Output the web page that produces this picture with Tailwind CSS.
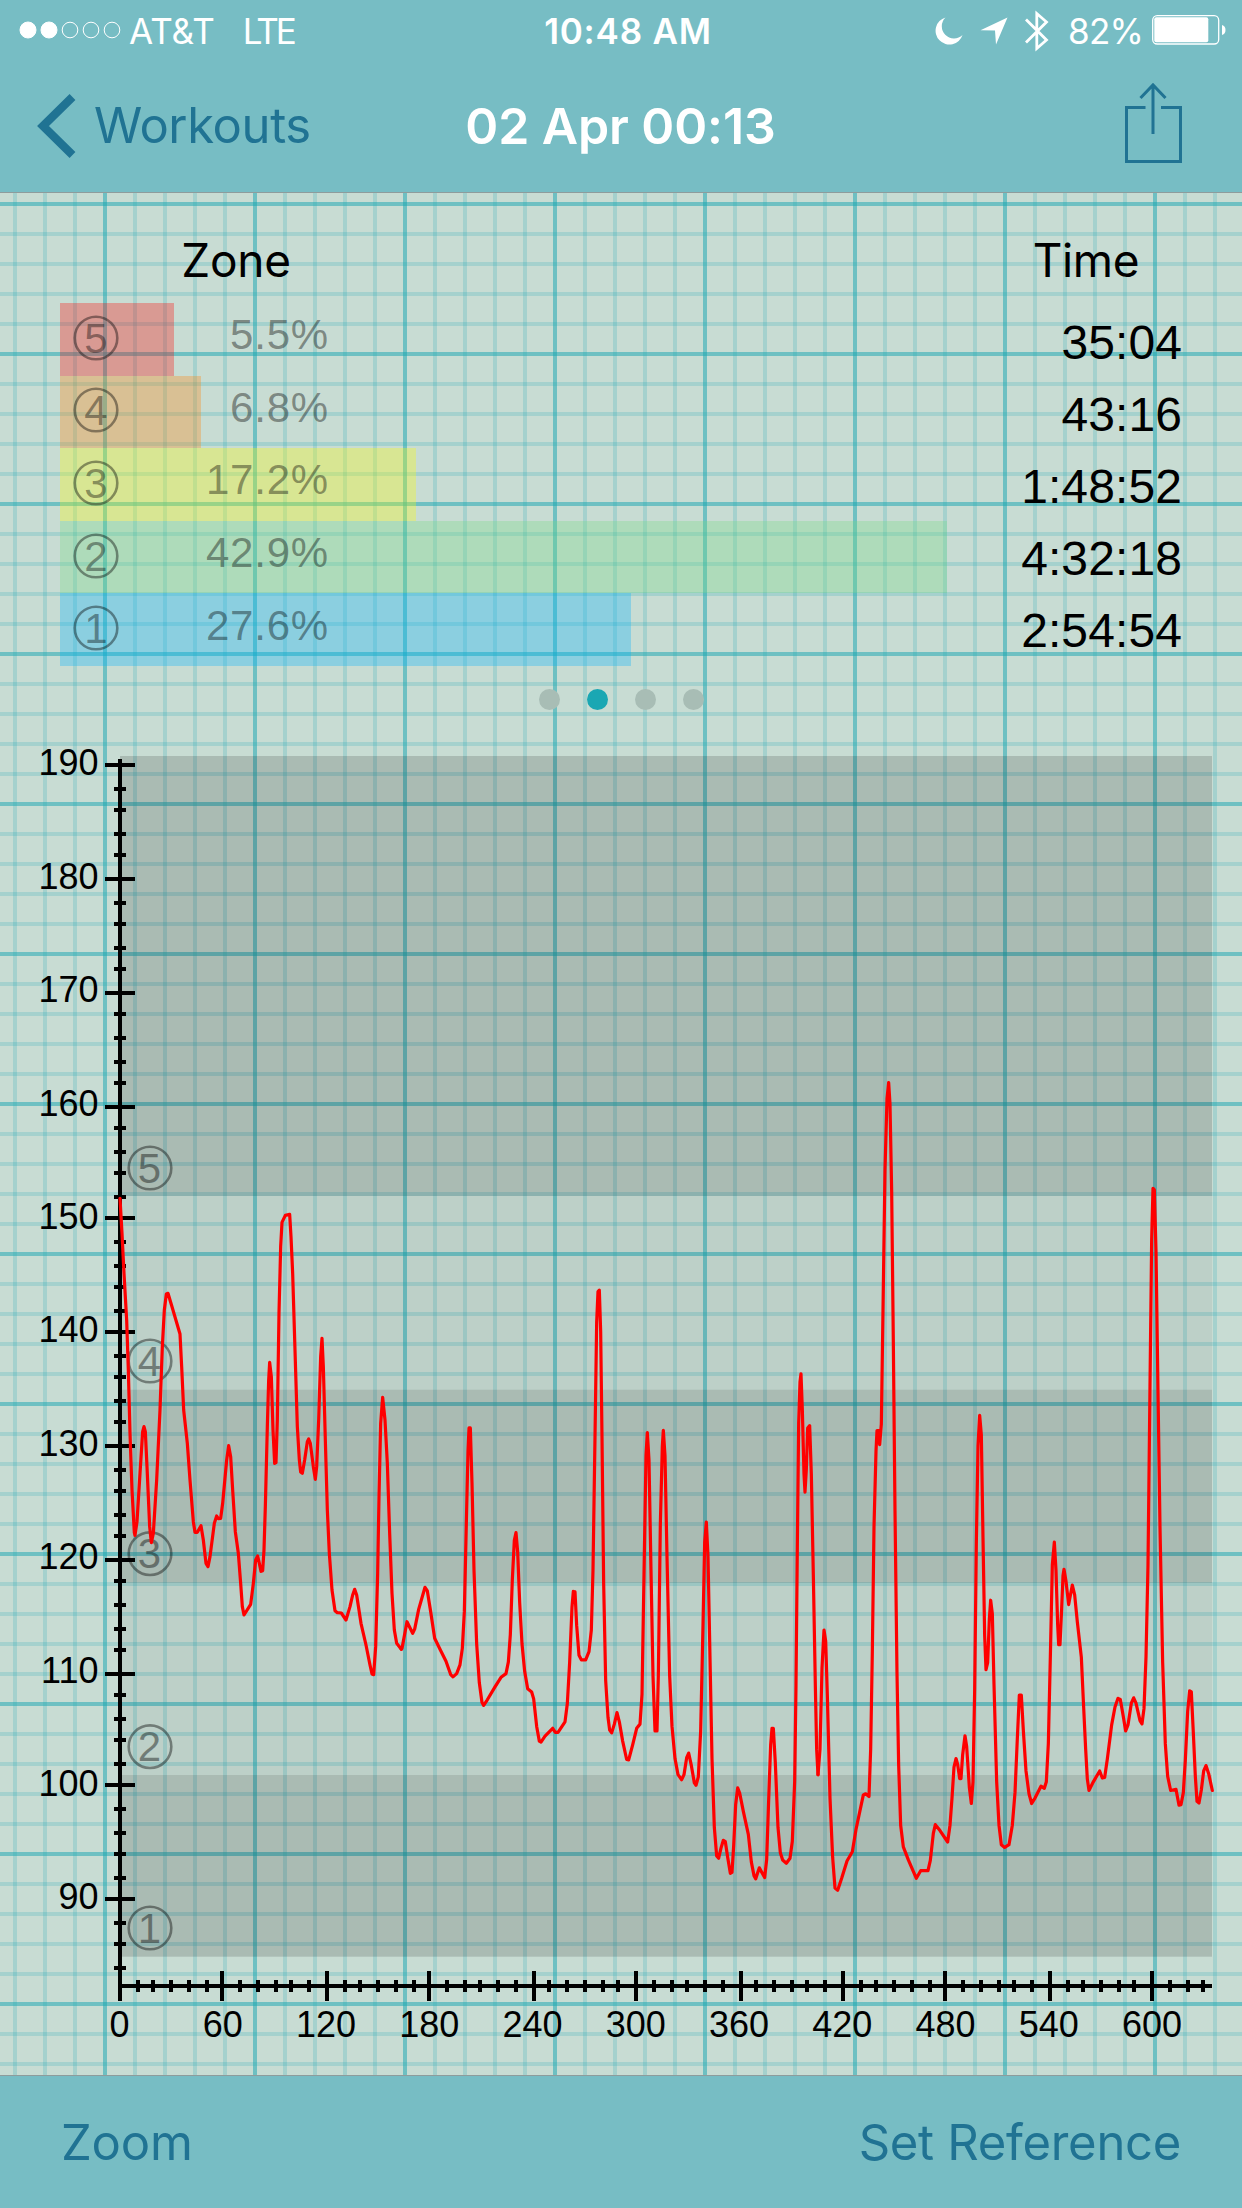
<!DOCTYPE html>
<html lang="en">

<head>
  <meta charset="UTF-8" />
  <title>02 Apr 00:13 - Workouts</title>
  <script src="https://cdn.jsdelivr.net/npm/@tailwindcss/browser@4"></script>
</head>

<body class="w-[1242px] h-[2208px] overflow-hidden flex flex-col bg-[#c8dcd3] font-['Inter',sans-serif]">
  <header class="h-[193px] shrink-0 bg-[#77bdc4] border-b border-[#8e9c9c]">
    <!-- status bar -->
    <div class="h-[60px] grid grid-cols-[1fr_auto_1fr] items-center pt-[2px] pl-[19px] pr-[16px] text-white text-[35px] leading-none">
      <div class="flex items-center">
        <svg class="w-[103px] h-[18px] mb-[2px]" viewBox="0 0 103 18" fill="none" stroke="#fff">
          <circle cx="9" cy="9" r="8" fill="#fff" />
          <circle cx="30" cy="9" r="8" fill="#fff" />
          <circle cx="51" cy="9" r="7.8" />
          <circle cx="72" cy="9" r="7.8" />
          <circle cx="93" cy="9" r="7.8" />
        </svg>
        <span class="ml-[7px] tracking-[0px]">AT&amp;T</span>
        <span class="ml-[28px] tracking-[-3px]">LTE</span>
      </div>
      <div class="font-semibold text-[35px] tracking-[0.8px] pl-[11px]">10:48 AM</div>
      <div class="flex items-center justify-end">
        <svg class="w-[28px] h-[28px] mr-[17px]" viewBox="0 0 28 28" fill="#fff">
          <path d="M10.5 0.5A13.8 13.8 0 1 0 27.5 18A11.8 11.8 0 0 1 10.5 0.5Z" />
        </svg>
        <svg class="w-[28px] h-[28px] mr-[17px]" viewBox="0 0 28 28" fill="#fff">
          <path d="M27.5 0.5L0.5 13.2L15 13.4L16 27.5Z" />
        </svg>
        <svg class="w-[24px] h-[42px] mr-[19px] mb-[1px]" viewBox="0 0 24 42" fill="none" stroke="#fff" stroke-width="2.8">
          <path d="M1 9.5L21.500 30L11.800 38.500V3.500L21.500 12L1 32.500" />
        </svg>
        <span class="tracking-[-0.8px] mr-[9px]">82%</span>
        <svg class="w-[74px] h-[30px] mb-[2px]" viewBox="0 0 74 30" fill="#fff">
          <rect x="0.700" y="0.700" width="66" height="28.300" rx="4.500" fill="none" stroke="#fff" stroke-width="1.300" />
          <rect x="2.300" y="2.300" width="54" height="25" rx="2" />
          <path d="M70 10Q73.500 11 73.500 15T70 20Z" />
        </svg>
      </div>
    </div>
    <!-- navigation bar -->
    <nav class="h-[132px] grid grid-cols-[1fr_auto_1fr] items-center pl-[36px] pr-[59px] pb-[1px] text-[49px] leading-none text-[#207393]">
      <a href="#" class="flex items-center">
        <svg class="w-[40px] h-[64px] shrink-0" viewBox="0 0 40 64" fill="none" stroke="currentColor" stroke-width="8.300">
          <path d="M36.500 3L7 32L36.500 61" />
        </svg>
        <span class="ml-[18px] tracking-[-0.4px]">Workouts</span>
      </a>
      <h1 class="font-semibold text-white text-[50px] tracking-[-0.1px] pl-[22px]">02 Apr 00:13</h1>
      <button class="justify-self-end pb-[6px]">
        <svg class="w-[60px] h-[82px]" viewBox="0 0 60 82" fill="none" stroke="currentColor" stroke-width="3">
          <path d="M22.500 25.500H3.500V79.500H57.500V25.500H38M30 3V52M17.500 16L30 3L42.500 16" />
        </svg>
      </button>
    </nav>
  </header>

  <main class="relative flex-1 flex flex-col">
    <!-- graph paper -->
    <svg class="absolute inset-0 w-full h-full" fill="none" stroke="#1aa7b2" stroke-width="4">
      <defs>
        <pattern id="paper" x="-60" y="-4" width="150" height="150" patternUnits="userSpaceOnUse">
          <path d="M45 0V150M75 0V150M105 0V150M135 0V150" stroke-opacity="0.2" />
          <path d="M0 45H150M0 75H150M0 105H150M0 135H150" stroke-opacity="0.2" />
          <path d="M15 0V150" stroke-opacity="0.52" />
          <path d="M0 15H150" stroke-opacity="0.52" />
        </pattern>
      </defs>
      <rect width="1242" height="1882" fill="url(#paper)" stroke="none" />
    </svg>

    <section class="relative">
      <div class="flex justify-between h-[110px] pt-[23px] items-center text-[46px] leading-none text-black tracking-[-0.3px]">
        <h2 class="w-[472px] text-center">Zone</h2>
        <h2 class="w-[312px] text-center">Time</h2>
      </div>
      <div class="flex justify-between pl-[60px] pr-[60px] font-['Liberation_Sans',sans-serif] leading-none">
        <div id="zones"></div>
        <div class="pt-[4px] h-[363px] text-[48px] text-black text-right tracking-[0.1px]">
          <div class="h-[72px] flex items-center justify-end">35:04</div>
          <div class="h-[72px] flex items-center justify-end">43:16</div>
          <div class="h-[72px] flex items-center justify-end">1:48:52</div>
          <div class="h-[72px] flex items-center justify-end">4:32:18</div>
          <div class="h-[72px] flex items-center justify-end">2:54:54</div>
        </div>
      </div>
      <div class="flex justify-center gap-[27px] pt-[23px]">
        <span class="size-[21px] rounded-full bg-[#a8bdb5]"></span>
        <span class="size-[21px] rounded-full bg-[#1aa7b3]"></span>
        <span class="size-[21px] rounded-full bg-[#a8bdb5]"></span>
        <span class="size-[21px] rounded-full bg-[#a8bdb5]"></span>
      </div>
    </section>

    <!-- heart rate chart -->
    <svg class="relative block w-[1242px] h-[1365px] font-['Liberation_Sans',sans-serif]" viewBox="0 710 1242 1365">
      <rect x="120" y="756" width="1092" height="440" fill-opacity="0.15" />
      <rect x="120" y="1196" width="1092" height="193.700" fill-opacity="0.05" />
      <rect x="120" y="1389.700" width="1092" height="193.300" fill-opacity="0.15" />
      <rect x="120" y="1583" width="1092" height="192" fill-opacity="0.05" />
      <rect x="120" y="1775" width="1092" height="181.700" fill-opacity="0.15" />
      <g id="bandLabels" opacity="0.4" font-size="42" text-anchor="middle"></g>
      <path d="M120 759V2001M120 1986H1212" stroke="#000" stroke-width="4" />
      <path id="ticks" stroke="#000" stroke-width="4" />
      <g id="axisLabels" font-size="36"></g>
      <g fill="none" stroke="#f00" stroke-width="3.200" stroke-linejoin="round" stroke-linecap="round">
        <polyline vector-effect="non-scaling-stroke" transform="translate(0 1180) scale(0.33333)" points="360,55 366,160 372,280 380,420 385,570 390,760 396,930 403,1058 405,1066 411,1025 420,880 428,755 432,740 436,755 441,860 449,1040 454,1088 460,1060 470,900 480,690 487,500 493,390 499,342 504,340 516,380 540,462 545,560 551,690 562,790 570,900 580,1025 585,1057 592,1057 603,1037 610,1080 618,1150 624,1160 630,1130 643,1030 650,1008 655,1016 662,1015 668,970 680,840 686,797 692,830 698,930 706,1055 715,1120 722,1210 727,1280 732,1305 752,1273 760,1210 767,1140 773,1128 778,1150 783,1174 788,1172 792,1110 796,980 802,740 806,600 809,547 814,590 819,750 824,850 828,848 832,720 837,400 842,200 846,127 856,106 869,103 873,170 878,280 885,510 892,740 898,840 902,876 907,880 914,840 922,785 926,777 931,790 940,860 946,898 950,860 956,720 962,530 966,475 970,560 976,780 982,990 988,1120 996,1230 1005,1292 1012,1298 1024,1299 1038,1320 1050,1280 1058,1245 1064,1228 1070,1245 1083,1330 1098,1395 1110,1455 1116,1482 1121,1484 1127,1400 1133,1180 1137,950 1142,730 1148,652 1155,720 1162,850 1169,1060 1176,1240 1183,1350 1190,1390 1204,1408" />
        <polyline vector-effect="non-scaling-stroke" transform="translate(400 1180) scale(0.33333 0.45918)" points="4,1022 6,1020 21,962 38,987 44,978 56,935 75,887 82,895 92,940 104,998 120,1022 138,1048 152,1077 159,1082 170,1075 180,1056 187,1020 193,940 198,780 204,590 207,540 211,540 216,660 222,850 230,1010 238,1095 246,1138 251,1144 262,1132 285,1104 303,1083 318,1075 325,1050 331,990 337,870 343,785 348,768 353,810 359,920 366,1010 374,1070 383,1108 395,1115 401,1130 410,1190 418,1222 423,1224 435,1211 458,1194 466,1203 474,1203 495,1180 502,1140 509,1050 516,930 520,896 525,897 530,970 537,1035 544,1045 557,1045 567,1027 574,980 579,850 585,560 590,310 594,243 598,240 602,330 606,560 611,880 617,1090 624,1170 629,1198 635,1204 643,1185 651,1160 658,1180 668,1222 680,1262 686,1263 698,1230 710,1194 720,1185 726,1120 732,860 738,600 742,550 747,610 753,850 759,1080 765,1200 771,1200 775,1080 781,750 787,580 790,545 795,600 801,820 809,1080 816,1190 825,1260 834,1295 845,1306 852,1295 860,1258 866,1248 874,1275 883,1313 888,1318 895,1300 902,1200 909,970 914,790 919,745 924,820 930,1040 936,1260 943,1410 950,1472 956,1477 963,1455 970,1438 976,1441 983,1475 991,1510 996,1508 1001,1450 1007,1360 1013,1324 1019,1335 1030,1375 1045,1425 1054,1485 1062,1515 1067,1522 1078,1498 1094,1519 1100,1480 1106,1350 1112,1230 1116,1194 1120,1194 1126,1270 1134,1410 1141,1465 1148,1481 1159,1488 1170,1477 1177,1440 1184,1310 1188,1100 1192,800 1196,530 1200,440 1203,422 1207,500 1212,640 1215,680 1219,630 1223,540 1229,535 1234,640 1240,860 1246,1100 1250,1240 1254,1295" />
        <polyline vector-effect="non-scaling-stroke" transform="translate(800 1050) scale(0.33333 0.54209)" points="54,1337 60,1290 66,1140 72,1070 77,1090 82,1190 90,1380 98,1490 105,1546 113,1550 125,1528 141,1496 157,1479 168,1438 190,1374 197,1372 207,1377 212,1290 217,1110 222,880 228,740 231,702 236,702 239,728 244,690 249,480 255,220 261,90 266,60 270,100 275,260 280,540 285,850 291,1150 296,1320 302,1430 310,1470 325,1494 349,1528 362,1514 384,1514 391,1495 400,1445 406,1429 420,1440 443,1461 450,1430 456,1380 462,1323 468,1307 473,1318 479,1344 483,1344 488,1300 495,1265 500,1285 508,1360 514,1390 519,1350 524,1180 529,910 534,730 539,674 544,710 549,900 554,1080 558,1143 563,1130 568,1050 572,1015 577,1040 582,1170 590,1350 597,1430 604,1466 614,1471 627,1466 637,1430 645,1370 652,1270 658,1190 664,1190 670,1255 678,1330 687,1372 695,1390 705,1380 723,1358 733,1362 739,1350 745,1280 751,1120 757,950 763,908 768,960 773,1060 776,1097 780,1097 785,1030 789,970 792,958 798,980 806,1023 812,1003 817,987 824,1005 832,1055 844,1120 850,1200 857,1290 862,1345 867,1366 880,1350 899,1330 907,1343 914,1342 922,1308 935,1245 945,1212 954,1196 961,1198 970,1230 977,1256 984,1245 994,1205 1001,1195 1008,1205 1020,1237 1026,1243 1032,1215 1038,1120 1044,950 1050,620 1055,350 1059,255 1063,258 1068,370 1074,630 1080,880 1088,1130 1096,1280 1103,1340 1112,1366 1128,1364 1137,1393 1143,1392 1150,1370 1156,1310 1163,1220 1169,1182 1174,1184 1180,1260 1186,1340 1191,1386 1197,1389 1204,1365 1211,1330 1218,1320 1226,1335 1237,1366" />
      </g>
    </svg>
  </main>

  <footer class="h-[133px] shrink-0 flex items-center justify-between px-[61px] bg-[#77bdc4] border-t border-[#8e9c9c] text-[49px] leading-none text-[#207393]">
    <button class="tracking-[-0.2px]">Zoom</button>
    <button class="tracking-[-0.3px]">Set Reference</button>
  </footer>

  <script>
    const zones = [
      { n: 5, pct: 5.5, bg: "bg-[#ff0000]/30" },
      { n: 4, pct: 6.8, bg: "bg-[#ff8000]/30" },
      { n: 3, pct: 17.2, bg: "bg-[#ffff00]/30" },
      { n: 2, pct: 42.9, bg: "bg-[#75dc80]/30" },
      { n: 1, pct: 27.6, bg: "bg-[#00b4ff]/30" }
    ];
    document.getElementById("zones").innerHTML = zones.map(z => `
      <div class="flex items-center h-[72.6px] pl-[13px] text-[42px] text-black/40 ${z.bg}" style="width: ${(z.pct * 20.68).toFixed(1)}px">
        <svg class="w-[46px] h-[46px] mb-[3px] shrink-0" viewBox="0 0 46 46">
          <circle cx="23" cy="23" r="21.300" fill="none" stroke="currentColor" stroke-width="2.600" />
          <text x="23" y="37.500" text-anchor="middle" fill="currentColor">${z.n}</text>
        </svg>
        <span class="w-[210px] shrink-0 pb-[8px] text-right tracking-[0.8px]">${z.pct}%</span>
      </div>`).join("");

    // zone numbers beside the heart rate axis
    const bands = [[5, 1168], [4, 1361], [3, 1553.7], [2, 1746.7], [1, 1928]];
    document.getElementById("bandLabels").innerHTML = bands.map(([n, y]) => `
      <circle cx="150" cy="${y}" r="21.300" fill="none" stroke="#000" stroke-width="2.600" />
      <text x="149.500" y="${y + 14.5}">${n}</text>`).join("");

    // ticks sit on whole points (3px)
    const snap = v => Math.round(v / 3) * 3;
    let ticks = "";
    let labels = "";
    for (let k = 0; k <= 53; k++) {
      const y = snap(765.75 + k * 22.68);
      ticks += k % 5 ? `M114 ${y}H126` : `M105 ${y}H135`;
      if (k % 5 === 0) labels += `<text x="98.500" y="${775.3 + k * 22.68}" text-anchor="end">${190 - k * 2}</text>`;
    }
    for (let k = 0; k <= 63; k++) {
      const x = 120 + k * 17.21;
      if (k) ticks += k % 6 ? `M${snap(x)} 1980V1992` : `M${snap(x)} 1971V2001`;
      if (k % 6 === 0) labels += `<text x="${x - 0.5}" y="2037" text-anchor="middle">${k * 10}</text>`;
    }
    document.getElementById("ticks").setAttribute("d", ticks);
    document.getElementById("axisLabels").innerHTML = labels;
  </script>
</body>

</html>
